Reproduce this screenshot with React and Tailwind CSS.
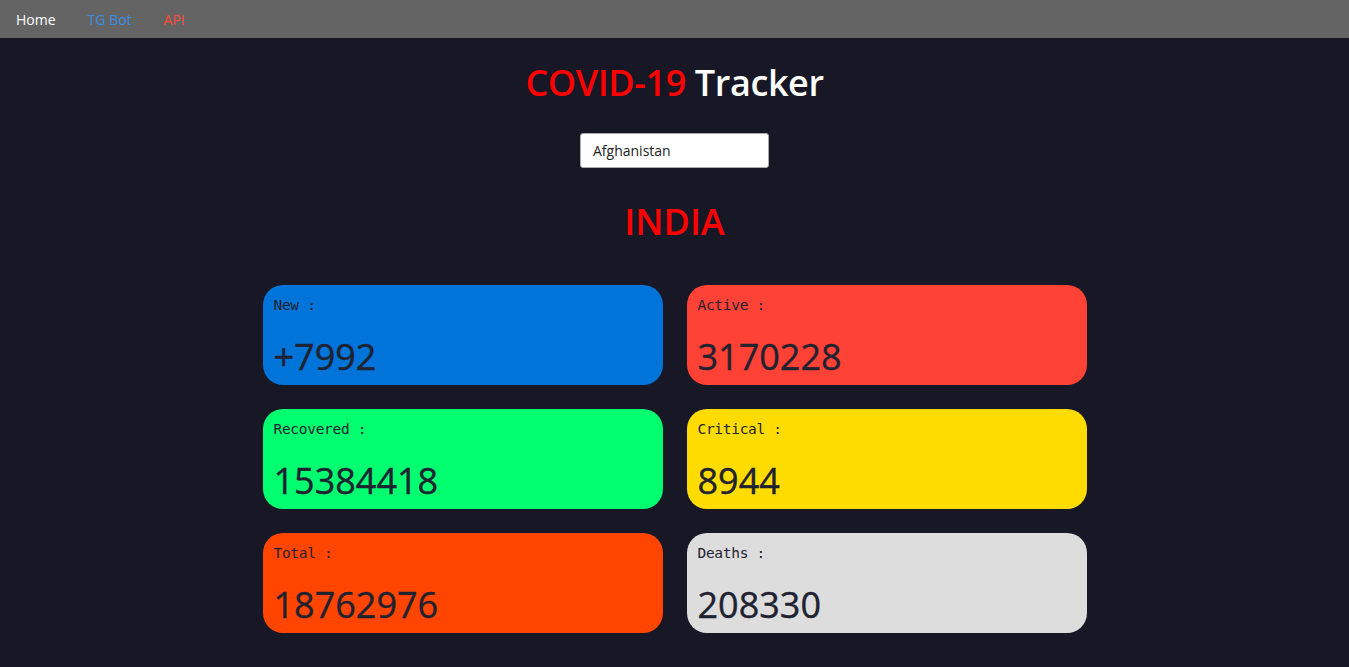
const STATS = [
  { label: 'New :', value: '+7992', bg: 'bg-[#0074d9]' },
  { label: 'Active :', value: '3170228', bg: 'bg-[#ff4136]' },
  { label: 'Recovered :', value: '15384418', bg: 'bg-[#01ff70]' },
  { label: 'Critical :', value: '8944', bg: 'bg-[#ffdc00]' },
  { label: 'Total :', value: '18762976', bg: 'bg-[#ff4500]' },
  { label: 'Deaths :', value: '208330', bg: 'bg-[#dddddd]' },
];

export default function App() {
  return (
    <div className="min-h-screen bg-[#171725] font-['Open_Sans',sans-serif]">
      {/* Navbar */}
      <nav className="h-[38px] bg-[#646464] flex items-center px-4 gap-8 text-[14px]">
        <a className="text-white">Home</a>
        <a className="text-[#3a8ee6]">TG Bot</a>
        <a className="text-[#ff4b3a]">API</a>
      </nav>

      <div className="flex flex-col items-center">
        <h1 className="mt-[22px] text-[36px] font-semibold leading-[46px] tracking-[-0.4px]">
          <span className="text-[#ff0000]">COVID-19</span>{' '}
          <span className="text-white">Tracker</span>
        </h1>

        <div className="mt-[27px] w-[189px] h-[35px] bg-white rounded-[3px] border border-[#aaa] flex items-center px-3 text-[14px] text-[#222]">
          Afghanistan
        </div>

        <h2 className="mt-[30px] text-[36px] font-semibold leading-[48px] text-[#ff0000]">INDIA</h2>

        <div className="mt-[39px] grid grid-cols-[400px_400px] gap-x-6 gap-y-6">
          {STATS.map((s) => (
            <div key={s.label} className={`h-[100px] rounded-[20px] ${s.bg} px-[11px] pt-[11px] text-[#1f2230]`}>
              <p className="font-['DejaVu_Sans_Mono',monospace] text-[14.5px] leading-[18px] tracking-[-0.3px]">{s.label}</p>
              <p className="mt-[21px] text-[36px] leading-[44px] [-webkit-text-stroke:0.4px_#1f2230]">{s.value}</p>
            </div>
          ))}
        </div>
      </div>
    </div>
  );
}
